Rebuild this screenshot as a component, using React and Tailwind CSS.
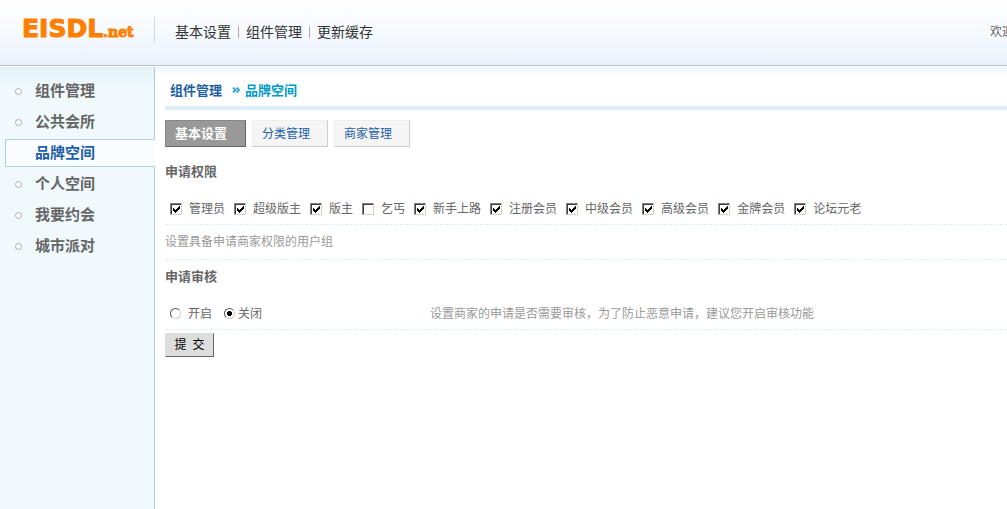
import { useState } from "react";

const SIDE_LINKS = ["组件管理", "公共会所", "品牌空间", "个人空间", "我要约会", "城市派对"];
const ACTIVE_LINK = "品牌空间";
const TOP_LINKS = ["基本设置", "组件管理", "更新缓存"];
const TABS = ["基本设置", "分类管理", "商家管理"];
const GROUPS = ["管理员", "超级版主", "版主", "乞丐", "新手上路", "注册会员", "中级会员", "高级会员", "金牌会员", "论坛元老"];

function Logo() {
  return (
    <a href="#" className="flex items-baseline font-bold text-[#ff7f00]">
      <span className="text-[25px] leading-6 [font-family:'DejaVu_Sans',sans-serif] [-webkit-text-stroke:1px_#ff7f00]">EISDL</span>
      <span className="text-sm leading-6 [font-family:'DejaVu_Serif',serif] [-webkit-text-stroke:1px_#ff7f00]">.net</span>
    </a>
  );
}

function Header() {
  return (
    <header className="flex h-[66px] border-b border-[#b4c8cc] bg-linear-to-b from-white via-[#f6fafe] to-[#e8f1fb]">
      <div className="my-[17px] flex h-[26px] w-[155px] shrink-0 border-r border-[#c3dbe4] pl-[22px]">
        <Logo />
      </div>
      <nav className="flex flex-1 items-start pt-[22px] pl-5 text-sm leading-5 text-[#333]">
        {TOP_LINKS.map((t, i) => (
          <span key={t} className="flex items-center">
            {i > 0 && <span className="mx-[7px] h-3 w-px bg-[#c79bb0]" />}
            <a href="#" className="leading-5">{t}</a>
          </span>
        ))}
      </nav>
      <div className="w-[17px] overflow-hidden pt-[22px] leading-5 whitespace-nowrap">欢迎</div>
    </header>
  );
}

function Sidebar() {
  return (
    <aside className="flex w-[155px] shrink-0 bg-linear-to-b from-[#e3f1f8] to-[#f0f9fc] to-[20px] shadow-[inset_-1px_0_0_#b0ced9]">
      <ul className="flex w-full flex-col gap-[3px] pt-[10px] pl-[5px]">
        {SIDE_LINKS.map((t) => {
          const active = t === ACTIVE_LINK;
          return (
            <li key={t}>
              <a
                href="#"
                className={
                  "flex h-7 items-center border text-[15px] font-bold " +
                  (active ? "border-[#b0ced9] border-r-[#fafdff] bg-[#fafdff] text-[#1d60a8]" : "border-transparent text-[#666]")
                }
              >
                <span className={"mr-[13px] ml-[9px] size-[7px] rounded-full border " + (active ? "border-transparent" : "border-[#aaa] bg-white")} />
                {t}
              </a>
            </li>
          );
        })}
      </ul>
    </aside>
  );
}

function Check({ label, initial }) {
  return (
    <label className="flex items-center">
      <span className="mr-[7px] grid">
        <input
          type="checkbox"
          defaultChecked={initial}
          className="peer col-start-1 row-start-1 size-3 appearance-none border border-t-[#808080] border-r-[#d4d0c8] border-b-[#d4d0c8] border-l-[#808080] bg-white shadow-[inset_1px_1px_0_#404040]"
        />
        <svg viewBox="0 0 12 12" shapeRendering="crispEdges" className="pointer-events-none invisible col-start-1 row-start-1 size-3 peer-checked:visible">
          <path d="M3 5h1v3H3zM4 6h1v3H4zM5 7h1v3H5zM6 6h1v3H6zM7 5h1v3H7zM8 4h1v3H8zM9 3h1v3H9z" fill="#000" />
        </svg>
      </span>
      {label}
    </label>
  );
}

function Radio({ label, checked, onChange, gap }) {
  return (
    <label className="flex items-center">
      <span className={"grid " + gap}>
        <input
          type="radio"
          name="review"
          checked={checked}
          onChange={onChange}
          className="peer col-start-1 row-start-1 size-[11px] appearance-none rounded-full border border-t-[#555] border-r-[#d4d0c8] border-b-[#d4d0c8] border-l-[#555] bg-white"
        />
        <svg viewBox="0 0 11 11" shapeRendering="crispEdges" className="pointer-events-none invisible col-start-1 row-start-1 size-[11px] peer-checked:visible">
          <path d="M4 3h3v1h1v3H7v1H4V7H3V4h1z" fill="#000" />
        </svg>
      </span>
      {label}
    </label>
  );
}

export default function App() {
  const [tab, setTab] = useState(TABS[0]);
  const [review, setReview] = useState("关闭");
  return (
    <div className="flex min-h-screen flex-col bg-white text-xs text-[#666] [font-family:'Liberation_Sans','Noto_Sans_CJK_SC',sans-serif]">
      <Header />
      <div className="flex flex-1 border-t border-white">
        <Sidebar />
        <main className="min-w-0 flex-1 bg-linear-to-b from-[#f0f8fd] to-white to-[10px] pl-[10px]">
          <div className="flex h-[43px] items-center gap-[10px] border-b-4 border-[#deeef8] pt-2 pl-[5px] text-[13px] font-bold text-[#1d60a8]">
            <a href="#">组件管理</a>
            <span className="flex items-center gap-[5px] text-[#0099cc]">
              <svg viewBox="0 0 8 6" className="h-[6px] w-2" fill="none" stroke="#2ba5d3" strokeWidth="1.8">
                <path d="M1 0.5l2.500 2.500L1 5.500M4.500 0.500l2.500 2.500L4.500 5.500" />
              </svg>
              品牌空间
            </span>
          </div>
          <div className="mt-[10px] flex gap-[6px]">
            {TABS.map((t) => (
              <button
                key={t}
                type="button"
                onClick={() => setTab(t)}
                className={
                  "flex h-[27px] items-center border pl-[9px] leading-4 " +
                  (t === tab
                    ? "w-[81px] border-t-[#888] border-r-[#666] border-b-[#666] border-l-[#888] bg-[#999] text-[13px] font-bold text-white"
                    : "w-[76px] border-t-[#eee] border-r-[#ccc] border-b-[#ccc] border-l-[#eee] bg-[#f5f5f5] text-[#1d60a8]")
                }
              >
                {t}
              </button>
            ))}
          </div>
          <form onSubmit={(e) => e.preventDefault()}>
            <fieldset>
              <legend className="pt-4 text-[13px] leading-[18px] font-bold">申请权限</legend>
              <div className="flex h-[44px] items-center gap-[9px] border-b border-dashed border-[#deeef8] pt-3 pl-[5px] whitespace-nowrap">
                {GROUPS.map((g) => (
                  <Check key={g} label={g} initial={g !== "乞丐"} />
                ))}
              </div>
            </fieldset>
            <p className="flex h-[35px] items-center border-b border-dashed border-[#deeef8] text-[#999]">设置具备申请商家权限的用户组</p>
            <fieldset>
              <legend className="pt-2 text-[13px] leading-[18px] font-bold">申请审核</legend>
              <div className="flex h-[44px] items-center border-b border-dashed border-[#deeef8] pt-3 pl-[5px]">
                <div className="flex w-[260px] gap-3">
                  <Radio label="开启" gap="mr-[7px]" checked={review === "开启"} onChange={() => setReview("开启")} />
                  <Radio label="关闭" gap="mr-[3px]" checked={review === "关闭"} onChange={() => setReview("关闭")} />
                </div>
                <p className="text-[#999]">设置商家的申请是否需要审核，为了防止恶意申请，建议您开启审核功能</p>
              </div>
            </fieldset>
            <button type="submit" className="mt-[3px] h-6 w-[49px] border border-t-[#ddd] border-r-[#666] border-b-[#666] border-l-[#ddd] bg-[#ddd] text-black">
              提&ensp;交
            </button>
          </form>
        </main>
      </div>
    </div>
  );
}
